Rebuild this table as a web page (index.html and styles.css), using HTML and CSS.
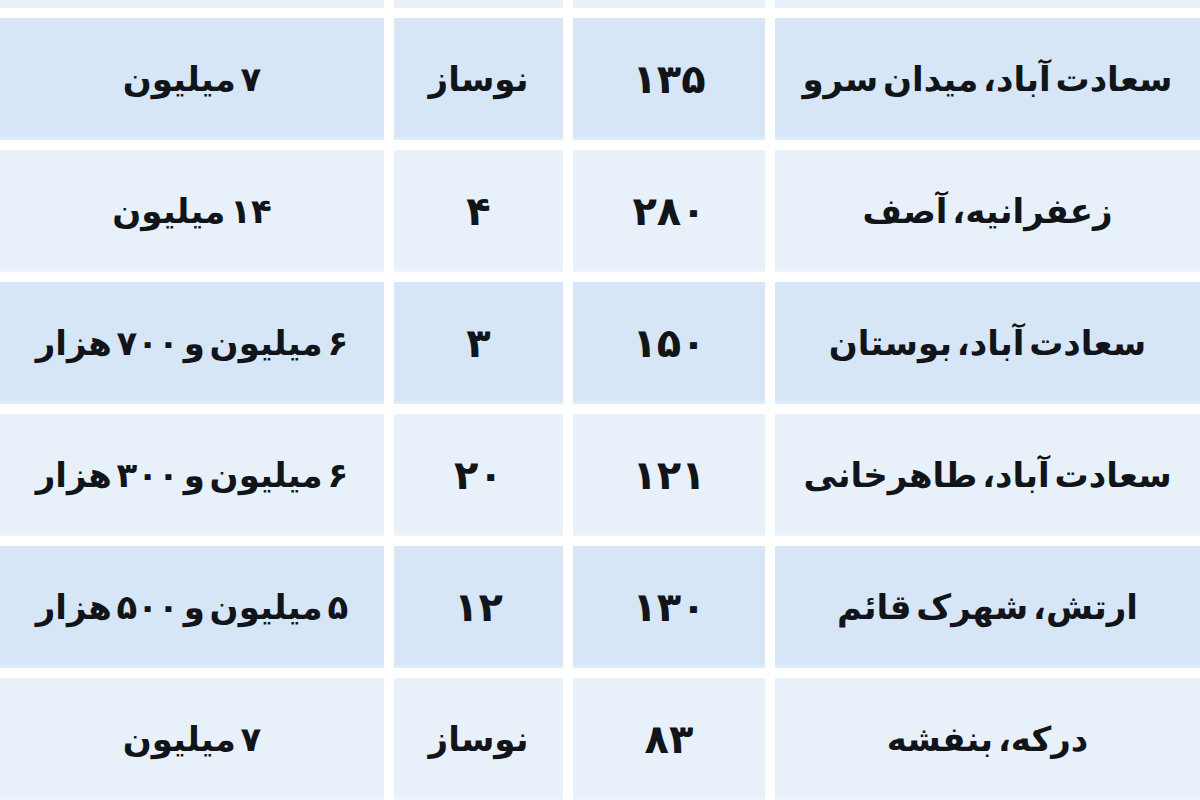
FILE: index.html
```html
<!DOCTYPE html>
<html lang="fa" dir="rtl">
<head>
<meta charset="utf-8">
<title>جدول قیمت</title>
<link rel="stylesheet" href="styles.css">
</head>
<body>
<div class="table">
  <div class="cell strip light"></div><div class="cell strip light"></div><div class="cell strip light"></div><div class="cell strip light"></div>

  <div class="cell dark">سعادت آباد، میدان سرو</div>
  <div class="cell dark num">۱۳۵</div>
  <div class="cell dark">نوساز</div>
  <div class="cell dark">۷ میلیون</div>

  <div class="cell light">زعفرانیه، آصف</div>
  <div class="cell light num">۲۸۰</div>
  <div class="cell light num">۴</div>
  <div class="cell light">۱۴ میلیون</div>

  <div class="cell dark">سعادت آباد، بوستان</div>
  <div class="cell dark num">۱۵۰</div>
  <div class="cell dark num">۳</div>
  <div class="cell dark">۶ میلیون و ۷۰۰ هزار</div>

  <div class="cell light">سعادت آباد، طاهرخانی</div>
  <div class="cell light num">۱۲۱</div>
  <div class="cell light num">۲۰</div>
  <div class="cell light">۶ میلیون و ۳۰۰ هزار</div>

  <div class="cell dark">ارتش، شهرک قائم</div>
  <div class="cell dark num">۱۳۰</div>
  <div class="cell dark num">۱۲</div>
  <div class="cell dark">۵ میلیون و ۵۰۰ هزار</div>

  <div class="cell light">درکه، بنفشه</div>
  <div class="cell light num">۸۳</div>
  <div class="cell light">نوساز</div>
  <div class="cell light">۷ میلیون</div>
</div>
</body>
</html>
```
FILE: styles.css
```css
html, body {
  margin: 0;
  padding: 0;
  background: #ffffff;
  overflow: hidden;
}
body {
  width: 1200px;
  height: 800px;
  font-family: "DejaVu Sans", "Noto Sans", sans-serif;
}
.table {
  display: grid;
  direction: rtl;
  grid-template-columns: 425px 192px 169px 384px;
  grid-template-rows: 8px repeat(6, 122px);
  column-gap: 10px;
  row-gap: 10px;
}
.cell {
  display: flex;
  align-items: center;
  justify-content: center;
  font-weight: bold;
  font-size: 34px;
  word-spacing: -7px;
  color: #111418;
  white-space: nowrap;
  box-shadow: inset 0 -3px 0 rgba(255,255,255,0.25);
}
.num {
  font-size: 40px;
  word-spacing: 0;
}
.dark {
  background: #d6e6f7;
}
.light {
  background: #e8f0fa;
}
.strip {
  box-shadow: none;
}
```
